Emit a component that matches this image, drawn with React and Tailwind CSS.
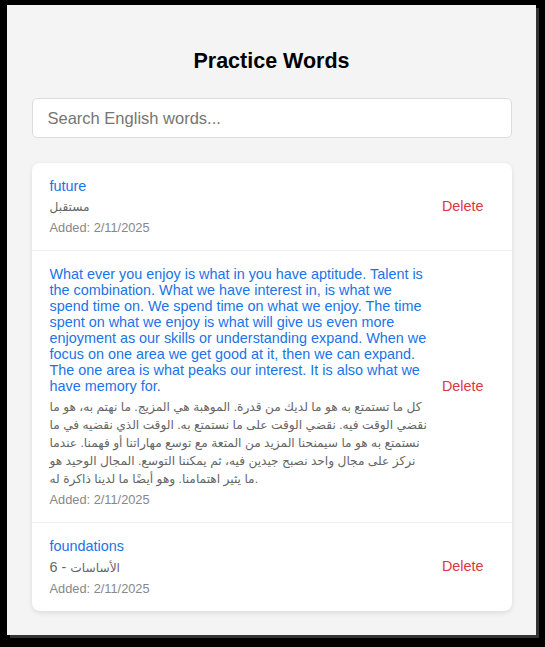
const words = [
  {
    id: 1,
    english: 'future',
    arabic: 'مستقبل',
    added: '2/11/2025',
  },
  {
    id: 2,
    english:
      'What ever you enjoy is what in you have aptitude. Talent is the combination. What we have interest in, is what we spend time on. We spend time on what we enjoy. The time spent on what we enjoy is what will give us even more enjoyment as our skills or understanding expand. When we focus on one area we get good at it, then we can expand. The one area is what peaks our interest. It is also what we have memory for.',
    arabic:
      'كل ما تستمتع به هو ما لديك من قدرة. الموهبة هي المزيج. ما نهتم به، هو ما نقضي الوقت فيه. نقضي الوقت على ما نستمتع به. الوقت الذي نقضيه في ما نستمتع به هو ما سيمنحنا المزيد من المتعة مع توسع مهاراتنا أو فهمنا. عندما نركز على مجال واحد نصبح جيدين فيه، ثم يمكننا التوسع. المجال الوحيد هو ما يثير اهتمامنا. وهو أيضًا ما لدينا ذاكرة له.',
    added: '2/11/2025',
  },
  {
    id: 3,
    english: 'foundations',
    arabic: 'الأساسات',
    suffix: ' - 6',
    added: '2/11/2025',
  },
];

export default function App() {
  return (
    <div
      className="h-screen w-full bg-black pl-[7px] pt-[5px]"
      style={{ fontFamily: '"Liberation Sans", Arial, "DejaVu Sans", sans-serif' }}
    >
      {/* window */}
      <div className="w-[529px] h-[630px] bg-[#f4f4f4] shadow-[3px_3px_0_#333] overflow-hidden pt-[44px]">
        <h1 className="text-center text-[21.5px] leading-[25px] font-bold text-black m-0">
          Practice Words
        </h1>

        <div className="w-[480px] mx-auto mt-[24px]">
          <input
            type="text"
            placeholder="Search English words..."
            className="w-full h-[40px] px-[15px] text-[16.5px] bg-white border border-[#dddddd] rounded-[5px] outline-none placeholder:text-[#757575]"
          />
        </div>

        {/* word list */}
        <div className="w-[480px] mx-auto mt-[25px] bg-white rounded-[8px] shadow-[0_2px_5px_rgba(0,0,0,0.1)]">
          {words.map((w, i) => (
            <div
              key={w.id}
              className={
                'flex items-center gap-[3px] px-[18px] py-[15px]' +
                (i < words.length - 1 ? ' border-b border-[#eeeeee]' : '')
              }
            >
              <div className="flex-1 min-w-0">
                <div className="text-[14.4px] leading-[16px] text-[#1a73e8]">{w.english}</div>
                <div className="mt-[4px] text-[12.2px] leading-[18px] text-[#666666]">
                  {w.arabic}
                  {w.suffix && <span className="text-[14.4px]">{w.suffix}</span>}
                </div>
                <div className="mt-[4px] text-[12.8px] leading-[15px] text-[#888888]">Added: {w.added}</div>
              </div>
              <button className="px-[10px] py-[5px] text-[14.4px] text-[#dc3545] bg-transparent border-none cursor-pointer">
                Delete
              </button>
            </div>
          ))}
        </div>
      </div>
    </div>
  );
}
